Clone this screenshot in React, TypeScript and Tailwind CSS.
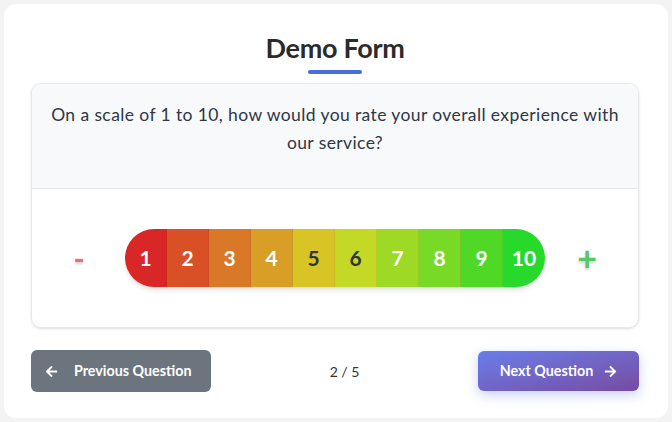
import { FaArrowLeft, FaArrowRight } from "react-icons/fa"

const ratings = [
  { n: 1, bg: "bg-[#d92626]", text: "text-white" },
  { n: 2, bg: "bg-[#d94f26]", text: "text-white" },
  { n: 3, bg: "bg-[#d97826]", text: "text-white" },
  { n: 4, bg: "bg-[#d99e26]", text: "text-white" },
  { n: 5, bg: "bg-[#d9c426]", text: "text-[#333333]" },
  { n: 6, bg: "bg-[#c4d926]", text: "text-[#333333]" },
  { n: 7, bg: "bg-[#9ed926]", text: "text-white" },
  { n: 8, bg: "bg-[#78d926]", text: "text-white" },
  { n: 9, bg: "bg-[#4fd926]", text: "text-white" },
  { n: 10, bg: "bg-[#26d92a]", text: "text-white" },
]

export default function App() {
  return (
    <div className="h-[422px] w-[672px] bg-[#f3f3f3] p-1 font-['Lato','Noto_Sans',sans-serif]">
      <div className="flex h-[414px] w-[664px] flex-col rounded-xl bg-white pl-[27px] pr-[29px] pt-[27px]">
        {/* Title */}
        <h1 className="text-center text-[27px] font-bold leading-[34px] tracking-[-0.3px] text-[#2b2b2b]">Demo Form</h1>
        <div className="mx-auto mt-[5px] h-1 w-[54px] rounded-full bg-[#4a6ee0]" />

        {/* Question card */}
        <div className="mt-[9px] overflow-hidden rounded-[10px] border border-[#e5e7eb] shadow-sm">
          <div className="border-b border-[#e2e8f0] bg-[#f8f9fa] px-4 pb-[31px] pt-[17px]">
            <p className="text-center text-[17.5px] leading-[28px] tracking-[0.4px] text-[#2d3748]">
              On a scale of 1 to 10, how would you rate your overall experience with our service?
            </p>
          </div>
          <div className="flex items-center justify-center pr-[4px] pt-10 pb-[40px]">
            <div className="mr-[31px] w-[30px] text-center text-[30px] font-bold leading-none text-[#e57373] [text-shadow:0_2px_3px_rgba(0,0,0,0.2)]">
              -
            </div>
            <div className="flex h-[58px] overflow-hidden rounded-full shadow-md">
              {ratings.map((r) => (
                <div
                  key={r.n}
                  className={`flex h-full w-[42px] items-center justify-center border-r border-black/5 text-[21px] font-bold last:border-r-0 ${r.bg} ${r.text}`}
                >
                  {r.n}
                </div>
              ))}
            </div>
            <div className="ml-[27px] w-[30px] text-center text-[34px] font-bold leading-none text-[#5cc468] [text-shadow:0_2px_3px_rgba(0,0,0,0.2)]">
              +
            </div>
          </div>
        </div>

        {/* Navigation */}
        <div className="mt-[22px] flex items-center justify-between">
          <button className="flex h-[42px] w-[180px] items-center gap-[16px] rounded-md bg-[#6c757d] pl-[14px] text-[14.3px] font-bold text-white">
            <FaArrowLeft className="h-[13px] w-[13px]" />
            Previous Question
          </button>
          <span className="text-[14px] text-[#333333]">2 / 5</span>
          <button className="flex h-10 w-[161px] items-center justify-center gap-[11px] rounded-md bg-gradient-to-br from-[#667eea] to-[#764ba2] text-[14.3px] font-bold text-white shadow-[0_4px_12px_rgba(102,126,234,0.35)]">
            Next Question
            <FaArrowRight className="h-[13px] w-[13px]" />
          </button>
        </div>
      </div>
    </div>
  )
}
